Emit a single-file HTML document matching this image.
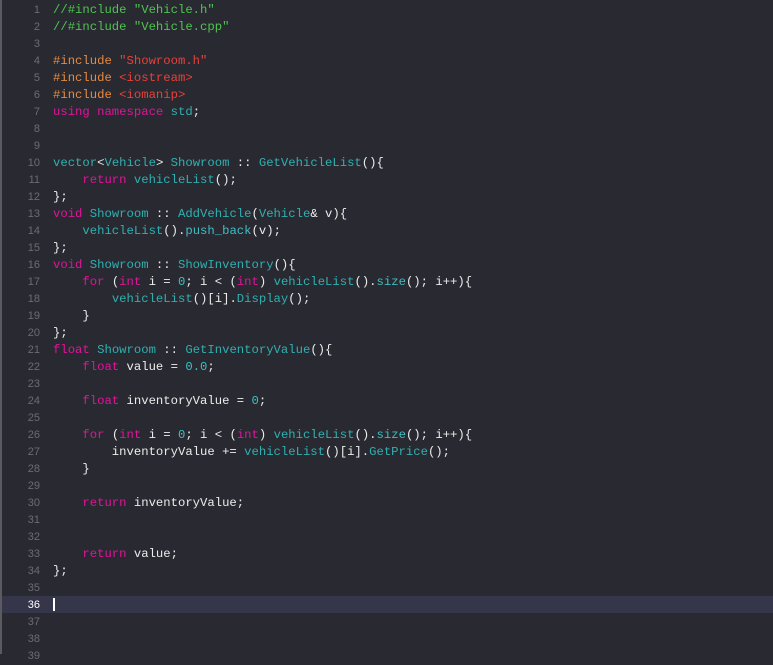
<!DOCTYPE html>
<html><head><style>
html,body{margin:0;padding:0;}
body{width:773px;height:654px;background:#292a31;overflow:hidden;position:relative;font-family:"Liberation Mono",monospace;font-size:12.25px;}
.lb{position:absolute;left:0;top:0;width:2px;height:654px;background:#5a5a60;}
.cur{position:absolute;left:2px;top:596px;width:771px;height:17px;background:#36364a;}
.caret{position:absolute;left:53px;top:598px;width:1.5px;height:13px;background:#fff;}
.ln{position:absolute;left:0;width:40px;text-align:right;color:#6b6b75;font-family:"Liberation Sans",sans-serif;font-size:11px;line-height:17px;}
.code{position:absolute;left:53px;top:2px;color:#ececec;margin:0;font-family:"Liberation Mono",monospace;font-size:12.25px;line-height:17px;white-space:pre;}
.c{color:#4ec44f}.p{color:#e8893f}.s{color:#e8403a}.k{color:#e0149a}.t{color:#2fb0b0}.m{color:#3ebec4}.n{color:#35c6c6}
</style></head><body>
<div class="lb"></div>
<div class="cur"></div>
<div class="caret"></div>
<pre class="code"><span class="c">//#include "Vehicle.h"</span>
<span class="c">//#include "Vehicle.cpp"</span>

<span class="p">#include</span> <span class="s">"Showroom.h"</span>
<span class="p">#include</span> <span class="s">&lt;iostream&gt;</span>
<span class="p">#include</span> <span class="s">&lt;iomanip&gt;</span>
<span class="k">using namespace</span> <span class="t">std</span>;


<span class="t">vector</span>&lt;<span class="t">Vehicle</span>&gt; <span class="t">Showroom</span> :: <span class="t">GetVehicleList</span>(){
    <span class="k">return</span> <span class="t">vehicleList</span>();
};
<span class="k">void</span> <span class="t">Showroom</span> :: <span class="t">AddVehicle</span>(<span class="t">Vehicle</span>&amp; v){
    <span class="t">vehicleList</span>().<span class="m">push_back</span>(v);
};
<span class="k">void</span> <span class="t">Showroom</span> :: <span class="t">ShowInventory</span>(){
    <span class="k">for</span> (<span class="k">int</span> i = <span class="n">0</span>; i &lt; (<span class="k">int</span>) <span class="t">vehicleList</span>().<span class="m">size</span>(); i++){
        <span class="t">vehicleList</span>()[i].<span class="t">Display</span>();
    }
};
<span class="k">float</span> <span class="t">Showroom</span> :: <span class="t">GetInventoryValue</span>(){
    <span class="k">float</span> value = <span class="n">0.0</span>;

    <span class="k">float</span> inventoryValue = <span class="n">0</span>;

    <span class="k">for</span> (<span class="k">int</span> i = <span class="n">0</span>; i &lt; (<span class="k">int</span>) <span class="t">vehicleList</span>().<span class="m">size</span>(); i++){
        inventoryValue += <span class="t">vehicleList</span>()[i].<span class="t">GetPrice</span>();
    }

    <span class="k">return</span> inventoryValue;


    <span class="k">return</span> value;
};
</pre>
<div class="ln" style="top:2px">1<br>2<br>3<br>4<br>5<br>6<br>7<br>8<br>9<br>10<br>11<br>12<br>13<br>14<br>15<br>16<br>17<br>18<br>19<br>20<br>21<br>22<br>23<br>24<br>25<br>26<br>27<br>28<br>29<br>30<br>31<br>32<br>33<br>34<br>35<br><span style="color:#fff">36</span><br>37<br>38<br>39</div>
</body></html>
